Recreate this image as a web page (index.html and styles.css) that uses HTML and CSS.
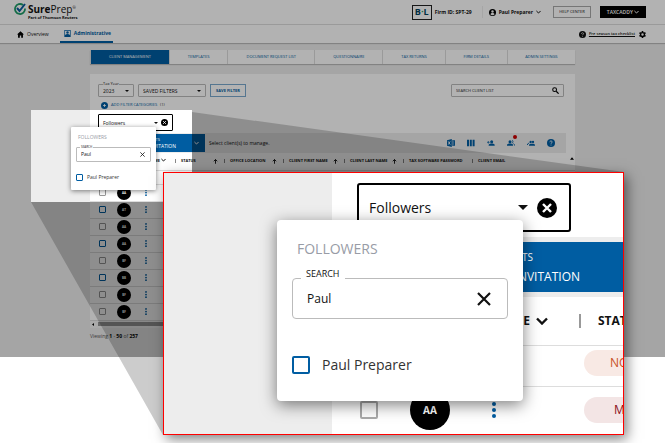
FILE: index.html
```html
<!DOCTYPE html>
<html lang="en">
<head>
<meta charset="utf-8">
<meta name="viewport" content="width=device-width, initial-scale=1">
<title>SurePrep - Client Management</title>
<link rel="stylesheet" href="styles.css">
</head>
<body>

<svg class="defs" aria-hidden="true">
  <symbol id="arrow" viewBox="0 0 10 10"><path d="M5 9.500V1M1.500 4.500L5 1l3.500 3.500" fill="none" stroke="currentColor" stroke-width="1.800"/></symbol>
  <symbol id="chevron" viewBox="0 0 12 8"><path d="M1 1.500l5 5 5-5" fill="none" stroke="currentColor" stroke-width="2.400"/></symbol>
  <symbol id="caret" viewBox="0 0 10 5"><path d="M0 0h10L5 5z" fill="currentColor"/></symbol>
  <symbol id="cross" viewBox="0 0 14 14"><path d="M1 1l12 12M13 1L1 13" stroke="currentColor" stroke-width="2.200"/></symbol>
  <symbol id="clear" viewBox="0 0 20 20"><circle cx="10" cy="10" r="10"/><path d="M6 6l8 8M14 6l-8 8" stroke="#fff" stroke-width="2.400"/></symbol>
  <symbol id="dots" viewBox="0 0 4 16"><circle cx="2" cy="2" r="2"/><circle cx="2" cy="8" r="2"/><circle cx="2" cy="14" r="2"/></symbol>
  <symbol id="help" viewBox="0 0 20 20"><circle cx="10" cy="10" r="10" fill="currentColor"/><path d="M7 8c0-4 6-4 6-.5 0 2-3 2.500-3 4.500M10 14v2.200" fill="none" stroke="#fff" stroke-width="2"/></symbol>
  <symbol id="people" viewBox="0 0 24 20"><circle cx="14" cy="6" r="4.500"/><path d="M5 18v-2c0-6 18-6 18 0v2z"/></symbol>
</svg>

<div class="stage">
  <div class="app">
    <header class="header">
      <a class="logo" href="#">
        <svg class="mark" viewBox="0 0 24 24"><path d="M18 4A10 10 0 1 0 22 11" fill="none" stroke="#1d9c68" stroke-width="3.500"/><path d="M6 10l5 6L22 2" fill="none" stroke="#0a5c9e" stroke-width="4"/></svg>
        <span class="brand"><span class="name"><b>Sure</b>Prep<sup>&reg;</sup></span><span class="sub">Part of Thomson Reuters</span></span>
      </a>
      <span class="firm-logo">B<i>&middot;</i>L</span>
      <b class="firm">Firm ID: SPT-29</b>
      <button type="button" class="user">
        <svg viewBox="0 0 20 20"><circle cx="10" cy="10" r="10"/><circle cx="10" cy="7" r="3.500" fill="#fff"/><path d="M4 15c1-5 11-5 12 0-3 4-9 4-12 0z" fill="#fff"/></svg>
        Paul Preparer
        <svg class="chev"><use href="#chevron"/></svg>
      </button>
      <button type="button" class="help-center">HELP CENTER</button>
      <button type="button" class="taxcaddy">TAXCADDY <svg class="chev"><use href="#chevron"/></svg></button>
    </header>

    <nav class="nav">
      <a href="#"><svg viewBox="0 0 20 20"><path d="M10 1L0 10h3v9h5v-6h4v6h5v-9h3z"/></svg>Overview</a>
      <a href="#" class="current"><svg viewBox="0 0 20 20"><path fill="#005da2" fill-rule="evenodd" d="M1 0h18v20H1zM3 2v12c3-3 11-3 14 0V2z"/><circle cx="10" cy="7" r="3.500" fill="#005da2"/></svg>Administrative</a>
      <a href="#" class="checklist"><svg viewBox="0 0 20 20"><use href="#help"/></svg><u>Pre season tax checklist</u></a>
      <button type="button" class="gear" aria-label="Settings"><svg viewBox="0 0 20 20"><circle cx="10" cy="10" r="5.500" fill="none" stroke="#000" stroke-width="4"/><path d="M10 0v4M10 16v4M1.500 5l3.500 2M15 13l3.500 2M1.500 15l3.500-2M15 7l3.500-2" stroke="#000" stroke-width="4.500"/></svg></button>
    </nav>

    <main class="main">
      <div class="tabs">
        <a href="#" class="tab on">CLIENT MANAGEMENT</a>
        <a href="#" class="tab t2">TEMPLATES</a>
        <a href="#" class="tab t3">DOCUMENT REQUEST LIST</a>
        <a href="#" class="tab t4">QUESTIONNAIRE</a>
        <a href="#" class="tab t5">TAX RETURNS</a>
        <a href="#" class="tab t5">FIRM DETAILS</a>
        <a href="#" class="tab t4">ADMIN SETTINGS</a>
      </div>

      <section class="panel">
        <div class="filters">
          <div class="field year">
            <label for="year">Tax Year</label>
            <select id="year"><option>2023</option></select>
            <svg class="caret"><use href="#caret"/></svg>
          </div>
          <div class="field saved">
            <select aria-label="Saved filters"><option>SAVED FILTERS</option></select>
            <svg class="caret"><use href="#caret"/></svg>
          </div>
          <button type="button" class="save">SAVE FILTER</button>
          <div class="field search">
            <input type="text" placeholder="SEARCH CLIENT LIST" aria-label="Search client list">
            <svg class="lens" viewBox="0 0 20 20"><circle cx="7.500" cy="7.500" r="5.500" fill="none" stroke="#000" stroke-width="3"/><path d="M12 12l7 7" stroke="#000" stroke-width="3.500"/></svg>
          </div>
        </div>
        <button type="button" class="add">
          <svg viewBox="0 0 20 20"><circle cx="10" cy="10" r="10" fill="#005da2"/><path d="M10 6v8M6 10h8" stroke="#fff" stroke-width="2.500"/></svg>
          ADD FILTER CATEGORIES <span>(1)</span>
        </button>
        <div class="chip">
          <span>Followers</span>
          <svg class="caret"><use href="#caret"/></svg>
          <button type="button" aria-label="Remove filter"><svg><use href="#clear"/></svg></button>
        </div>

        <div class="toolbar">
          <button type="button" class="invite"><span class="top">CLIENTS</span><span>SEND INVITATION</span></button>
          <button type="button" class="more" aria-label="More actions"><svg class="chev"><use href="#chevron"/></svg></button>
          <span class="hint">Select client(s) to manage.</span>
          <div class="tools">
            <svg viewBox="0 0 20 20"><path d="M0 3l12-3v20L0 17zM13 3h7v14h-7z"/><path d="M3 6l5 8M8 6l-5 8" stroke="#fff" stroke-width="2"/><path d="M13 7h5M13 10h5M13 13h5" stroke="#fff"/></svg>
            <svg viewBox="0 0 20 20"><path d="M0 2h5v16H0zM7 2h5v16H7zM14 2h5v16h-5z"/></svg>
            <svg viewBox="0 0 24 20"><use href="#people"/><path d="M0 8h8M4 4v8" stroke="#005da2" stroke-width="2"/></svg>
            <span class="alert"><svg viewBox="0 0 24 20"><circle cx="9" cy="6" r="4.500"/><path d="M0 18v-2c0-6 18-6 18 0v2z"/><path d="M15 2c4 0 4 8 0 8M19 12c3 1 4 3 4 6" fill="none" stroke="#005da2" stroke-width="2.500"/></svg><i></i></span>
            <svg viewBox="0 0 24 20"><circle cx="11" cy="7" r="3.500"/><circle cx="18" cy="7" r="3.500"/><path d="M6 18v-2c0-5 18-5 18 0v2z"/><path d="M0 16l6-7" stroke="#005da2" stroke-width="3"/></svg>
            <svg viewBox="0 0 20 20"><use href="#help"/></svg>
          </div>
        </div>

        <table class="clients">
          <thead>
            <tr>
              <th class="c1"></th><th class="c2"></th>
              <th class="c3">NAME <svg class="chev"><use href="#chevron"/></svg></th>
              <th class="c4"><div>STATUS <svg><use href="#arrow"/></svg></div></th>
              <th class="c5"><div>OFFICE LOCATION <svg><use href="#arrow"/></svg></div></th>
              <th class="c6"><div>CLIENT FIRST NAME <svg><use href="#arrow"/></svg></div></th>
              <th class="c5"><div>CLIENT LAST NAME <svg><use href="#arrow"/></svg></div></th>
              <th class="c7"><div>TAX SOFTWARE PASSWORD</div></th>
              <th><div>CLIENT EMAIL</div></th>
            </tr>
          </thead>
          <tbody>
            <tr class="first"><td colspan="9"></td></tr>
            <tr><td><input type="checkbox" aria-label="Select AA"></td><td><span class="avatar">AA</span></td><td><svg class="dots"><use href="#dots"/></svg></td><td colspan="6"></td></tr>
            <tr><td><input type="checkbox" class="blue" aria-label="Select AT"></td><td><span class="avatar">AT</span></td><td><svg class="dots"><use href="#dots"/></svg></td><td colspan="6"></td></tr>
            <tr><td><input type="checkbox" aria-label="Select AA"></td><td><span class="avatar">AA</span></td><td><svg class="dots"><use href="#dots"/></svg></td><td colspan="6"></td></tr>
            <tr><td><input type="checkbox" class="blue" aria-label="Select AA"></td><td><span class="avatar">AA</span></td><td><svg class="dots"><use href="#dots"/></svg></td><td colspan="6"></td></tr>
            <tr><td><input type="checkbox" aria-label="Select BF"></td><td><span class="avatar">BF</span></td><td><svg class="dots"><use href="#dots"/></svg></td><td colspan="6"></td></tr>
            <tr><td><input type="checkbox" class="blue" aria-label="Select BB"></td><td><span class="avatar">BB</span></td><td><svg class="dots"><use href="#dots"/></svg></td><td colspan="6"></td></tr>
            <tr><td><input type="checkbox" aria-label="Select BF"></td><td><span class="avatar">BF</span></td><td><svg class="dots"><use href="#dots"/></svg></td><td colspan="6"></td></tr>
            <tr><td><input type="checkbox" aria-label="Select BF"></td><td><span class="avatar">BF</span></td><td><svg class="dots"><use href="#dots"/></svg></td><td colspan="6"></td></tr>
          </tbody>
        </table>
        <div class="scroll"><svg viewBox="0 0 4 6"><path d="M4 0v6L0 3z"/></svg><span></span></div>
        <svg class="scroll-up" viewBox="0 0 6 4"><path d="M0 4h6L3 0z"/></svg>
      </section>
      <p class="paging">Viewing <b>1</b> - <b>50</b> of <b>257</b></p>
    </main>

    <div class="popover small">
      <h2>FOLLOWERS</h2>
      <div class="box">
        <label for="find-small">SEARCH</label>
        <input type="text" id="find-small" value="Paul">
        <button type="button" aria-label="Clear"><svg><use href="#cross"/></svg></button>
      </div>
      <label class="person"><input type="checkbox" class="blue">Paul Preparer</label>
    </div>
    <div class="spotlight"></div>
  </div>

  <svg class="beam" aria-hidden="true"><path d="M192 112L624 172H163V435L31 202H192z"/></svg>

  <div class="callout">
    <div class="page">
      <div class="chip">
        <span>Followers</span>
        <svg class="caret"><use href="#caret"/></svg>
        <button type="button" aria-label="Remove filter"><svg><use href="#clear"/></svg></button>
      </div>
      <div class="strip">
        <button type="button" class="invite"><span class="top">CLIENTS</span><span>SEND INVITATION</span></button>
      </div>
      <table class="clients">
        <thead>
          <tr><th class="c1"></th><th class="c2"></th><th class="c3">NAME <svg class="chev"><use href="#chevron"/></svg></th><th class="c4"><div>STATUS</div></th></tr>
        </thead>
        <tbody>
          <tr class="first"><td></td><td></td><td></td><td><span class="pill no">NOT SENT</span></td></tr>
          <tr><td><input type="checkbox" aria-label="Select AA"></td><td><span class="avatar">AA</span></td><td><svg class="dots"><use href="#dots"/></svg></td><td><span class="pill miss">MISSING</span></td></tr>
        </tbody>
      </table>
    </div>
    <div class="popover">
      <h2>FOLLOWERS</h2>
      <div class="box">
        <label for="find">SEARCH</label>
        <input type="text" id="find" value="Paul">
        <button type="button" aria-label="Clear"><svg><use href="#cross"/></svg></button>
      </div>
      <label class="person"><input type="checkbox" class="blue">Paul Preparer</label>
    </div>
  </div>
</div>

</body>
</html>
```
FILE: styles.css
```css
* {
  box-sizing: border-box;
}

body {
  margin: 0;
  background: #fff;
  color: #111;
  font-family: "Open Sans", "Noto Sans", sans-serif;
  font-size: 5px;
  line-height: 8px;
}

button, input, select {
  font: inherit;
  color: inherit;
  margin: 0;
  padding: 0;
  border: none;
  background: none;
}

button {
  cursor: pointer;
}

a {
  color: inherit;
  text-decoration: none;
}

svg {
  flex: none;
}

.defs {
  position: absolute;
  width: 0;
  height: 0;
}

.stage {
  position: relative;
  overflow: hidden;
  padding-bottom: 86px;
}

.app {
  position: relative;
  overflow: hidden;
  background: #ededed;
}

/* header */
.header {
  display: flex;
  align-items: center;
  height: 25px;
  padding: 0 19px 0 14px;
  background: #fff;
  border-bottom: 1px solid #ddd;
}

.logo {
  display: flex;
  align-items: flex-start;
  gap: 2px;
  margin-right: auto;
}

.mark {
  width: 12px;
  height: 12px;
}

.brand {
  display: flex;
  flex-direction: column;
}

.name {
  font-size: 10px;
  line-height: 12px;
}

.name sup {
  font-size: 4px;
  line-height: 4px;
}

.sub {
  font-size: 4px;
  font-weight: 700;
  line-height: 6px;
}

.firm-logo {
  width: 20px;
  height: 15px;
  border: 1px solid #222;
  color: #00425e;
  font-size: 9px;
  font-weight: 700;
  line-height: 12px;
  text-align: center;
}

.firm-logo i {
  color: #1d9c68;
}

.firm {
  margin-left: 3px;
  padding-right: 10px;
  border-right: 1px solid #eee;
  line-height: 12px;
}

.user {
  display: flex;
  align-items: center;
  gap: 3px;
  margin-left: 6px;
  font-weight: 700;
}

.user svg {
  width: 7px;
  height: 7px;
}

svg.chev, .user svg.chev {
  width: 5px;
  height: 4px;
}

.help-center {
  width: 38px;
  height: 12px;
  margin-left: 12px;
  border: 1px solid #aaa;
  font-size: 4px;
}

.taxcaddy {
  width: 46px;
  height: 12px;
  margin-left: 9px;
  background: #000;
  color: #fff;
  font-weight: 600;
}

.nav {
  display: flex;
  height: 18px;
  padding: 0 19px 0 17px;
  background: #fff;
  box-shadow: 0 1px 1px #bbb;
}

.nav a {
  display: flex;
  align-items: center;
  gap: 3px;
}

.nav svg {
  width: 7px;
  height: 7px;
}

.nav .current {
  margin-left: 11px;
  padding: 0 2px 0 4px;
  border-bottom: 2px solid #005da2;
  color: #005da2;
  font-weight: 700;
}

.nav .checklist {
  margin-left: auto;
  margin-right: 4px;
  font-size: 4px;
  font-weight: 600;
}

.gear {
  display: flex;
  align-items: center;
}

/* client management */
.main {
  padding: 7px 90px 17px;
}

.tabs {
  display: flex;
  height: 14px;
  margin-bottom: 10px;
  background: #fff;
  box-shadow: 0 1px 1px #bbb;
}

.tab {
  flex: 58 1 0;
  border-left: 1px solid #ddd;
  color: #005da2;
  font-size: 4px;
  line-height: 14px;
  text-align: center;
}

.tab.on {
  flex-grow: 79;
  background: #005da2;
  color: #fff;
}

.tab.t3 {
  flex-grow: 87;
}

.tab.t4 {
  flex-grow: 68;
}

.tab.t5 {
  flex-grow: 62;
}

.panel {
  position: relative;
  padding-top: 10px;
  background: #fff;
}

.filters {
  display: flex;
  gap: 4px;
  padding: 0 11px 0 8px;
}

.field {
  position: relative;
  display: flex;
  align-items: center;
  height: 13px;
  padding: 0 4px;
  border: 1px solid #bbb;
  border-radius: 1px;
}

.field label {
  position: absolute;
  top: -5px;
  left: 4px;
  background: #fff;
  font-size: 4px;
}

.field select, .field input {
  flex: 1;
  min-width: 0;
  appearance: none;
  outline: none;
}

.field input {
  font-size: 4px;
}

input::placeholder {
  color: #222;
  opacity: 1;
}

.caret {
  width: 4px;
  height: 2px;
}

.year {
  width: 36px;
}

.saved {
  width: 68px;
}

.save {
  width: 36px;
  border: 1px solid #7aa9cf;
  color: #005da2;
  font-size: 4px;
  font-weight: 700;
}

.search {
  width: 113px;
  margin-left: auto;
}

.lens {
  width: 7px;
  height: 7px;
}

.add {
  display: flex;
  align-items: center;
  gap: 3px;
  margin: 4px 8px 5px 11px;
  color: #005da2;
  font-size: 4px;
}

.add svg {
  width: 7px;
  height: 7px;
}

.add span {
  color: #333;
}

.chip {
  display: flex;
  align-items: center;
  width: 75px;
  height: 17px;
  margin-left: 8px;
  padding: 0 4px;
  border: 1px solid #000;
  border-radius: 1px;
  font-size: 5px;
}

.chip span {
  flex: 1;
}

.chip button {
  display: flex;
  margin-left: 3px;
}

.chip button svg {
  width: 7px;
  height: 7px;
}

.toolbar {
  display: flex;
  align-items: center;
  height: 20px;
  margin: 2px 9px 0 0;
  background: #ededed;
}

.invite {
  display: flex;
  flex-direction: column;
  align-items: flex-end;
  justify-content: center;
  width: 98px;
  height: 18px;
  padding-right: 12px;
  background: #005da2;
  color: #fff;
  line-height: 7px;
}

.invite .top {
  margin-right: 16px;
  font-size: 4px;
}

.more {
  width: 17px;
  height: 18px;
  background: #005da2;
  color: #fff;
}

.hint {
  margin-left: 4px;
}

.tools {
  display: flex;
  gap: 12px;
  margin-left: auto;
  padding-right: 11px;
  fill: #005da2;
  color: #005da2;
}

.tools svg {
  display: block;
  width: 8px;
  height: 8px;
}

.alert {
  position: relative;
}

.alert i {
  position: absolute;
  top: -4px;
  right: -2px;
  width: 4px;
  height: 4px;
  border-radius: 50%;
  background: #c00;
}

.clients {
  width: 100%;
  border-collapse: collapse;
  table-layout: fixed;
}

.clients th, .clients td {
  height: 17px;
  padding: 0;
  border-bottom: 1px solid #ddd;
  text-align: center;
  white-space: nowrap;
}

.clients .first td {
  height: 14px;
}

.clients th {
  font-size: 4px;
}

.clients th div {
  display: flex;
  align-items: center;
  justify-content: space-between;
  height: 4px;
  padding: 0 6px 0 5px;
  border-left: 1px solid #888;
}

.clients th div svg {
  width: 5px;
  height: 5px;
}

.c1 {
  width: 25px;
}

.c2 {
  width: 18px;
}

.c3 {
  width: 42px;
}

.clients .c3 {
  padding-right: 9px;
  text-align: right;
}

.c4 {
  width: 49px;
}

.c5 {
  width: 59px;
}

.c6 {
  width: 61px;
}

.c7 {
  width: 69px;
}

.clients td:nth-child(3) {
  padding-left: 5px;
  text-align: left;
}

input[type=checkbox] {
  display: block;
  appearance: none;
  flex: none;
  width: 7px;
  height: 7px;
  border: 1px solid #999;
  border-radius: 1px;
}

input[type=checkbox].blue {
  border-color: #005da2;
}

.clients td input[type=checkbox] {
  margin: 0 auto;
}

.avatar {
  display: block;
  width: 14px;
  height: 14px;
  margin: 0 auto;
  border-radius: 50%;
  background: #000;
  color: #fff;
  font-size: 3px;
  font-weight: 700;
  line-height: 14px;
}

.dots {
  display: block;
  width: 6px;
  height: 7px;
  margin-left: 5px;
  fill: #005da2;
}

.scroll {
  display: flex;
  align-items: center;
  gap: 4px;
  height: 7px;
  padding: 0 6px 0 2px;
  background: #f4f4f4;
}

.scroll svg {
  width: 2px;
  height: 3px;
}

.scroll span {
  flex: 1;
  height: 4px;
  background: #999;
}

.scroll-up {
  position: absolute;
  top: 83px;
  right: 1px;
  width: 4px;
  height: 3px;
}

.paging {
  margin: 4px 0 0;
  color: #555;
}

.paging b {
  color: #000;
}

/* followers popover */
.popover {
  position: absolute;
  top: 47px;
  left: 113px;
  width: 246px;
  padding: 20px 15px 27px;
  border-radius: 4px;
  background: #fff;
  box-shadow: 0 4px 16px rgba(0, 0, 0, 0.5);
  font-size: 14px;
  line-height: 18px;
}

.popover h2 {
  margin: 0 5px 20px;
  color: #989ca6;
  font-size: 14px;
  font-weight: 400;
  line-height: 18px;
}

.box {
  position: relative;
  display: flex;
  align-items: center;
  height: 41px;
  margin-bottom: 37px;
  padding: 0 16px 0 14px;
  border: 1px solid #bbb;
  border-radius: 4px;
}

.box label {
  position: absolute;
  top: -11px;
  left: 8px;
  padding: 0 5px;
  background: #fff;
  font-size: 9px;
  line-height: 12px;
}

.box input {
  flex: 1;
  min-width: 0;
  outline: none;
  font-size: 12px;
}

.box button, .box svg {
  display: block;
  width: 14px;
  height: 14px;
}

.person {
  display: flex;
  align-items: center;
  gap: 12px;
  color: #333;
}

.callout input[type=checkbox] {
  width: 18px;
  height: 18px;
  border: 2px solid #aaa;
  border-radius: 2px;
}

.callout input[type=checkbox].blue {
  border-color: #005da2;
}

.popover.small {
  top: 127px;
  left: 71px;
  width: 85px;
  padding: 6px 5px 9px;
  border-radius: 1px;
  box-shadow: 0 1px 5px rgba(0, 0, 0, 0.5);
  font-size: 5px;
  line-height: 7px;
}

.small h2 {
  margin: 0 2px 6px;
  font-size: 5px;
  line-height: 8px;
}

.small .box {
  height: 15px;
  margin-bottom: 12px;
  padding: 0 5px 0 4px;
  border-radius: 1px;
}

.small .box label {
  top: -4px;
  left: 3px;
  padding: 0 1px;
  font-size: 3px;
  line-height: 6px;
}

.small .box input {
  font-size: 5px;
}

.small .box button, .small .box svg {
  width: 5px;
  height: 5px;
}

.small .person {
  gap: 4px;
}

/* everything outside the spotlight is dimmed */
.spotlight {
  position: absolute;
  top: 110px;
  left: 31px;
  width: 161px;
  height: 92px;
  box-shadow: 0 0 0 4000px rgba(0, 0, 0, 0.3);
}

.beam {
  position: absolute;
  top: 0;
  left: 0;
  width: 100%;
  height: 100%;
  fill: rgba(0, 0, 0, 0.2);
}

/* enlarged view */
.callout {
  position: absolute;
  top: 172px;
  left: 163px;
  width: 461px;
  height: 263px;
  border: 1px solid #f00;
  background: #ededed;
  box-shadow: 3px 4px 12px rgba(0, 0, 0, 0.5);
}

.page {
  height: 100%;
  margin-left: 168px;
  padding-top: 10px;
  overflow: hidden;
  background: #fff;
}

.callout .chip {
  width: 214px;
  height: 49px;
  margin: 0 0 5px 25px;
  padding: 0 12px 0 10px;
  border-width: 2px;
  border-radius: 3px;
  font-size: 14px;
}

.callout .chip .caret {
  width: 10px;
  height: 5px;
}

.callout .chip button {
  margin-left: 9px;
}

.callout .chip button svg {
  width: 20px;
  height: 20px;
}

.strip {
  padding: 5px 0;
  background: #ededed;
}

.callout .invite {
  width: 100%;
  height: 50px;
  padding-right: 43px;
  font-size: 12px;
  line-height: 19px;
}

.callout .invite .top {
  margin-right: 47px;
  font-size: 10px;
}

.callout .clients th, .callout .clients td {
  height: 48px;
  font-size: 12px;
}

.callout .clients .first td {
  height: 41px;
  padding-bottom: 6px;
}

.callout .c1 {
  width: 74px;
}

.callout .c2 {
  width: 48px;
}

.callout .clients .c3 {
  width: 125px;
  padding-right: 31px;
}

.callout svg.chev {
  width: 12px;
  height: 8px;
  margin-left: 3px;
}

.callout .clients th div {
  height: 14px;
  padding: 0 17px;
  border-left: 2px solid #999;
}

.callout .avatar {
  width: 40px;
  height: 40px;
  font-size: 10px;
  line-height: 40px;
}

.callout .clients td:nth-child(3) {
  padding-left: 25px;
}

.callout .dots {
  width: 20px;
  height: 16px;
}

.pill {
  display: block;
  width: 90px;
  height: 26px;
  margin-left: 5px;
  padding-left: 26px;
  border-radius: 13px;
  font-size: 12px;
  line-height: 26px;
  text-align: left;
}

.no {
  background: #f8e9e4;
  color: #c8501e;
}

.miss {
  padding-left: 30px;
  background: #f3e5e5;
  color: #8c1020;
}
```
